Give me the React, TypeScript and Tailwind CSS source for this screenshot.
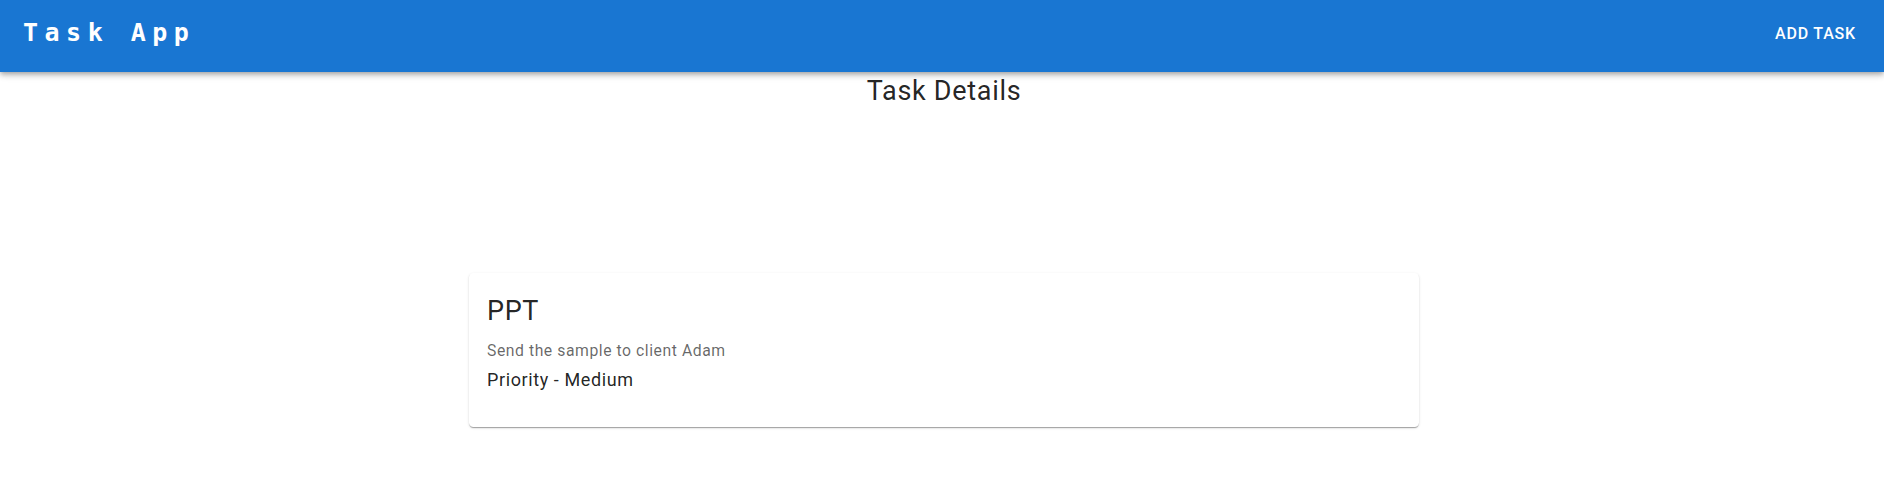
import React from "react";

export default function App() {
  return (
    <div className="min-h-[483px] bg-white" style={{ fontFamily: "Roboto, 'Liberation Sans', sans-serif" }}>
      <header className="relative z-10 h-[72px] bg-[#1976d2] text-white flex items-center pl-[23px] pr-[19px] shadow-[0px_2px_4px_-1px_rgba(0,0,0,0.2),0px_4px_5px_0px_rgba(0,0,0,0.14),0px_1px_10px_0px_rgba(0,0,0,0.12)]">
        <div className="flex-1 mt-[-7px]">
          <span className="text-[25px] font-bold tracking-[6.5px] leading-[1.6]" style={{ fontFamily: "'DejaVu Sans Mono', monospace" }}>
            Task App
          </span>
        </div>
        <button className="px-[9px] py-[7px] mt-[-5px] text-[16px] font-medium uppercase tracking-[0.8px] leading-[1.75] rounded text-white">
          Add Task
        </button>
      </header>
      <main className="flex flex-col items-center pl-[4px]">
        <h5 className="mt-[1px] text-[27px] leading-[36px] tracking-[0.7px] text-[rgba(0,0,0,0.87)] font-normal">Task Details</h5>
        <div className="mt-[164px] w-[950px] bg-white rounded-[4.5px] shadow-[0px_2px_1px_-1px_rgba(0,0,0,0.2),0px_1px_1px_0px_rgba(0,0,0,0.14),0px_1px_3px_0px_rgba(0,0,0,0.12)] px-[18px] pt-[20px] pb-[34px]">
          <div className="text-[27px] leading-[36px] tracking-[0.6px] text-[rgba(0,0,0,0.87)]">PPT</div>
          <div className="mt-[11px] text-[15.75px] leading-[22.5px] tracking-[0.55px] text-[rgba(0,0,0,0.6)]">Send the sample to client Adam</div>
          <div className="mt-[3px] text-[18px] leading-[27px] tracking-[0.6px] text-[rgba(0,0,0,0.87)]">Priority - Medium</div>
        </div>
      </main>
    </div>
  );
}
